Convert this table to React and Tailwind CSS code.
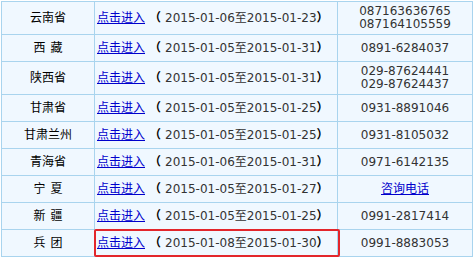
import React from "react";

const rows = [
  { name: ["云南省"], h: "h-[33px]", range: ["2015-01-06", "2015-01-23"], phone: ["087163636765", "087164105559"] },
  { name: ["西", "藏"], h: "h-[27px]", range: ["2015-01-05", "2015-01-31"], phone: ["0891-6284037"] },
  { name: ["陕西省"], h: "h-[33px]", range: ["2015-01-05", "2015-01-31"], phone: ["029-87624441", "029-87624437"] },
  { name: ["甘肃省"], h: "h-[27px]", range: ["2015-01-05", "2015-01-25"], phone: ["0931-8891046"] },
  { name: ["甘肃兰州"], h: "h-[27px]", range: ["2015-01-05", "2015-01-25"], phone: ["0931-8105032"] },
  { name: ["青海省"], h: "h-[27px]", range: ["2015-01-06", "2015-01-31"], phone: ["0971-6142135"] },
  { name: ["宁", "夏"], h: "h-[27px]", range: ["2015-01-05", "2015-01-27"], phone: null },
  { name: ["新", "疆"], h: "h-[27px]", range: ["2015-01-05", "2015-01-25"], phone: ["0991-2817414"] },
  { name: ["兵", "团"], h: "h-[27px]", range: ["2015-01-08", "2015-01-30"], phone: ["0991-8883053"] },
];

const font = { fontFamily: '"DejaVu Sans", "Noto Sans CJK SC", sans-serif' };

const App = () => {
  return (
    <div className="w-[475px] h-[258px] bg-white overflow-hidden" style={font}>
      <div className="relative pt-[1px] pl-[1px]">
        <div className="w-[472px] border-l border-t border-[#a9d4ee] text-[12px] text-[#333]">
          {rows.map((row, i) => (
            <div key={i} className={`flex ${row.h}`}>
              <div className="w-[93px] shrink-0 border-r border-b border-[#a9d4ee] bg-[#f0f8ff] flex items-center justify-center text-black">
                {row.name.length === 2 ? (
                  <>
                    {row.name[0]}
                    <span className="inline-block w-[5px]" />
                    {row.name[1]}
                  </>
                ) : (
                  row.name[0]
                )}
              </div>
              <div className="w-[243px] shrink-0 border-r border-b border-[#a9d4ee] bg-[#f0f8ff] flex items-center pl-[2px] whitespace-nowrap">
                <a href="#" className="text-[#0000cc] underline">
                  点击进入
                </a>
                <span className="inline-block w-[4px]" />
                <span className="font-bold text-black">（</span>
                <span className="inline-block w-[4px]" />
                {row.range[0]}至{row.range[1]}
                <span className="font-bold text-black">）</span>
              </div>
              <div className="w-[135px] shrink-0 border-r border-b border-[#a9d4ee] bg-[#f0f8ff] flex flex-col items-center justify-center leading-[13px]">
                {row.phone ? (
                  row.phone.map((p) => <span key={p}>{p}</span>)
                ) : (
                  <a href="#" className="text-[#0000cc] underline">
                    咨询电话
                  </a>
                )}
              </div>
            </div>
          ))}
        </div>
        {/* highlight box around the last row link */}
        <div className="absolute left-[94px] top-[229px] w-[246px] h-[28px] border-2 border-[#e3262b] rounded-[2px]" />
      </div>
    </div>
  );
};

export default App;
